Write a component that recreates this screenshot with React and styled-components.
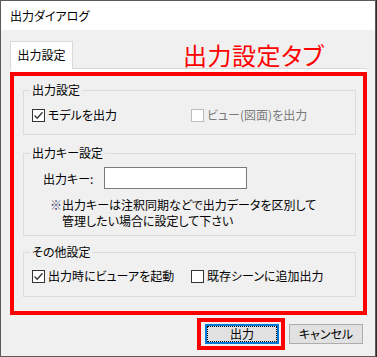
import React from 'react'
import styled, { createGlobalStyle, css } from 'styled-components'

const GlobalStyle = createGlobalStyle`
  html, body {
    margin: 0;
    padding: 0;
    background: #2d2d2d;
  }
  body {
    font-family: "Noto Sans CJK JP", "Noto Sans", sans-serif;
    font-size: 12px;
    font-feature-settings: "palt";
    color: #000;
  }
`

const Window = styled.div`
  width: 376px;
  height: 357px;
  box-sizing: border-box;
  border: 1px solid #5a5a5a;
  display: flex;
  flex-direction: column;
  background: #f0f0f0;
`
const TitleBar = styled.div`
  height: 29px;
  flex-shrink: 0;
  display: flex;
  align-items: center;
  padding-left: 9px;
  background: #fff;
  line-height: 16px;
`
const Client = styled.div`
  flex: 1;
  display: flex;
  flex-direction: column;
  padding: 11px 0 0 9px;
`
const TabStrip = styled.div`
  display: flex;
  align-items: flex-end;
  height: 27px;
`
const Tab = styled.div`
  position: relative;
  z-index: 1;
  width: 63px;
  height: 28px;
  margin-bottom: -1px;
  box-sizing: border-box;
  border: 1px solid #d9d9d9;
  border-bottom: none;
  background: #fff;
  display: flex;
  align-items: center;
  justify-content: center;
  line-height: 16px;
  padding-bottom: 1px;
`
const Annotation = styled.div`
  margin-left: 110px;
  color: #ff0000;
  font-size: 24px;
  line-height: 24px;
  letter-spacing: 0.5px;
  padding-bottom: 1px;
`
const Panel = styled.div`
  width: 357px;
  box-sizing: border-box;
  border-top: 1px solid #d9d9d9;
  padding-top: 3px;
  background: linear-gradient(#fff, #fff) top / 354px 3px no-repeat;
`
const RedFrame = styled.div`
  box-sizing: border-box;
  border: 4px solid #ff0000;
  background: #f0f0f0;
  padding: 3px 7px 14px 9px;
  display: flex;
  flex-direction: column;
`
const Group = styled.fieldset`
  margin: ${p => p.$top}px 0 0 0;
  min-width: 0;
  border: 1px solid #dcdcdc;
  padding: ${p => p.$pad};
`
const Legend = styled.legend`
  padding: 0 2px;
  margin-left: -2px;
  line-height: 16px;
`
const CheckRow = styled.div`
  display: grid;
  grid-template-columns: 159px 1fr;
  height: 16px;
  align-items: center;
`
const CheckItem = styled.label`
  display: flex;
  align-items: center;
  gap: 3px;
  line-height: 16px;
  white-space: nowrap;
  ${p => p.$disabled && css`
    color: #7a7a7a;
  `}
`
const Box = styled.span`
  width: 13px;
  height: 13px;
  box-sizing: border-box;
  border: 1px solid ${p => (p.$disabled ? '#bcbcbc' : '#333')};
  background: #fff;
  display: flex;
  align-items: center;
  justify-content: center;
  flex-shrink: 0;
`
const KeyRow = styled.div`
  display: grid;
  grid-template-columns: 61px 143px;
  align-items: center;
  padding-left: 11px;
  height: 22px;
`
const KeyInput = styled.div`
  height: 22px;
  box-sizing: border-box;
  border: 1px solid #7a7a7a;
  background: #fff;
`
const Note = styled.div`
  display: grid;
  grid-template-columns: 12px 1fr;
  margin-top: 8px;
  padding-left: 18px;
  line-height: 16px;
`
const Mark = styled.span`
  color: #3a3a6a;
`
const ButtonRow = styled.div`
  display: flex;
  justify-content: flex-end;
  align-items: center;
  margin-top: 3px;
  padding-right: 12px;
`
const Highlight = styled.div`
  border: 4px solid #ff0000;
  padding: 2px 2px 2px 4px;
  display: flex;
`
const Button = styled.button`
  width: 74px;
  height: 20px;
  box-sizing: border-box;
  padding: 0;
  font: inherit;
  line-height: 16px;
  color: #000;
  background: #e1e1e1;
  border: 1px solid #adadad;
  ${p => p.$primary && css`
    border: 2px solid #0078d7;
    outline: 1px dotted #000;
    outline-offset: -3px;
  `}
  ${p => !p.$primary && css`
    margin-left: 4px;
  `}
`

const Check = ({ checked, disabled, children }) => (
  <CheckItem $disabled={disabled}>
    <Box $disabled={disabled}>
      {checked && (
        <svg width="11" height="11" viewBox="0 0 11 11">
          <path d="M1.5 5.5 L4.2 8.2 L9.5 2.2" fill="none" stroke="#333" strokeWidth="1.3" />
        </svg>
      )}
    </Box>
    {children}
  </CheckItem>
)

const App = () => {
  return (
    <>
      <GlobalStyle />
      <Window>
        <TitleBar>出力ダイアログ</TitleBar>
        <Client>
          <TabStrip>
            <Tab>出力設定</Tab>
            <Annotation>出力設定タブ</Annotation>
          </TabStrip>
          <Panel>
            <RedFrame>
              <Group $top={3} $pad="9px 8px 11px 8px">
                <Legend>出力設定</Legend>
                <CheckRow>
                  <Check checked>モデルを出力</Check>
                  <Check disabled>ビュー(図面)を出力</Check>
                </CheckRow>
              </Group>
              <Group $top={10} $pad="6px 8px 6px 8px">
                <Legend>出力キー設定</Legend>
                <KeyRow>
                  <span>出力キー:</span>
                  <KeyInput />
                </KeyRow>
                <Note>
                  <Mark>※</Mark>
                  <span>出力キーは注釈同期などで出力データを区別して<br />管理したい場合に設定して下さい</span>
                </Note>
              </Group>
              <Group $top={8} $pad="8px 8px 12px 8px">
                <Legend>その他設定</Legend>
                <CheckRow>
                  <Check checked>出力時にビューアを起動</Check>
                  <Check>既存シーンに追加出力</Check>
                </CheckRow>
              </Group>
            </RedFrame>
          </Panel>
          <ButtonRow>
            <Highlight>
              <Button $primary>出力</Button>
            </Highlight>
            <Button>キャンセル</Button>
          </ButtonRow>
        </Client>
      </Window>
    </>
  )
}

export default App
